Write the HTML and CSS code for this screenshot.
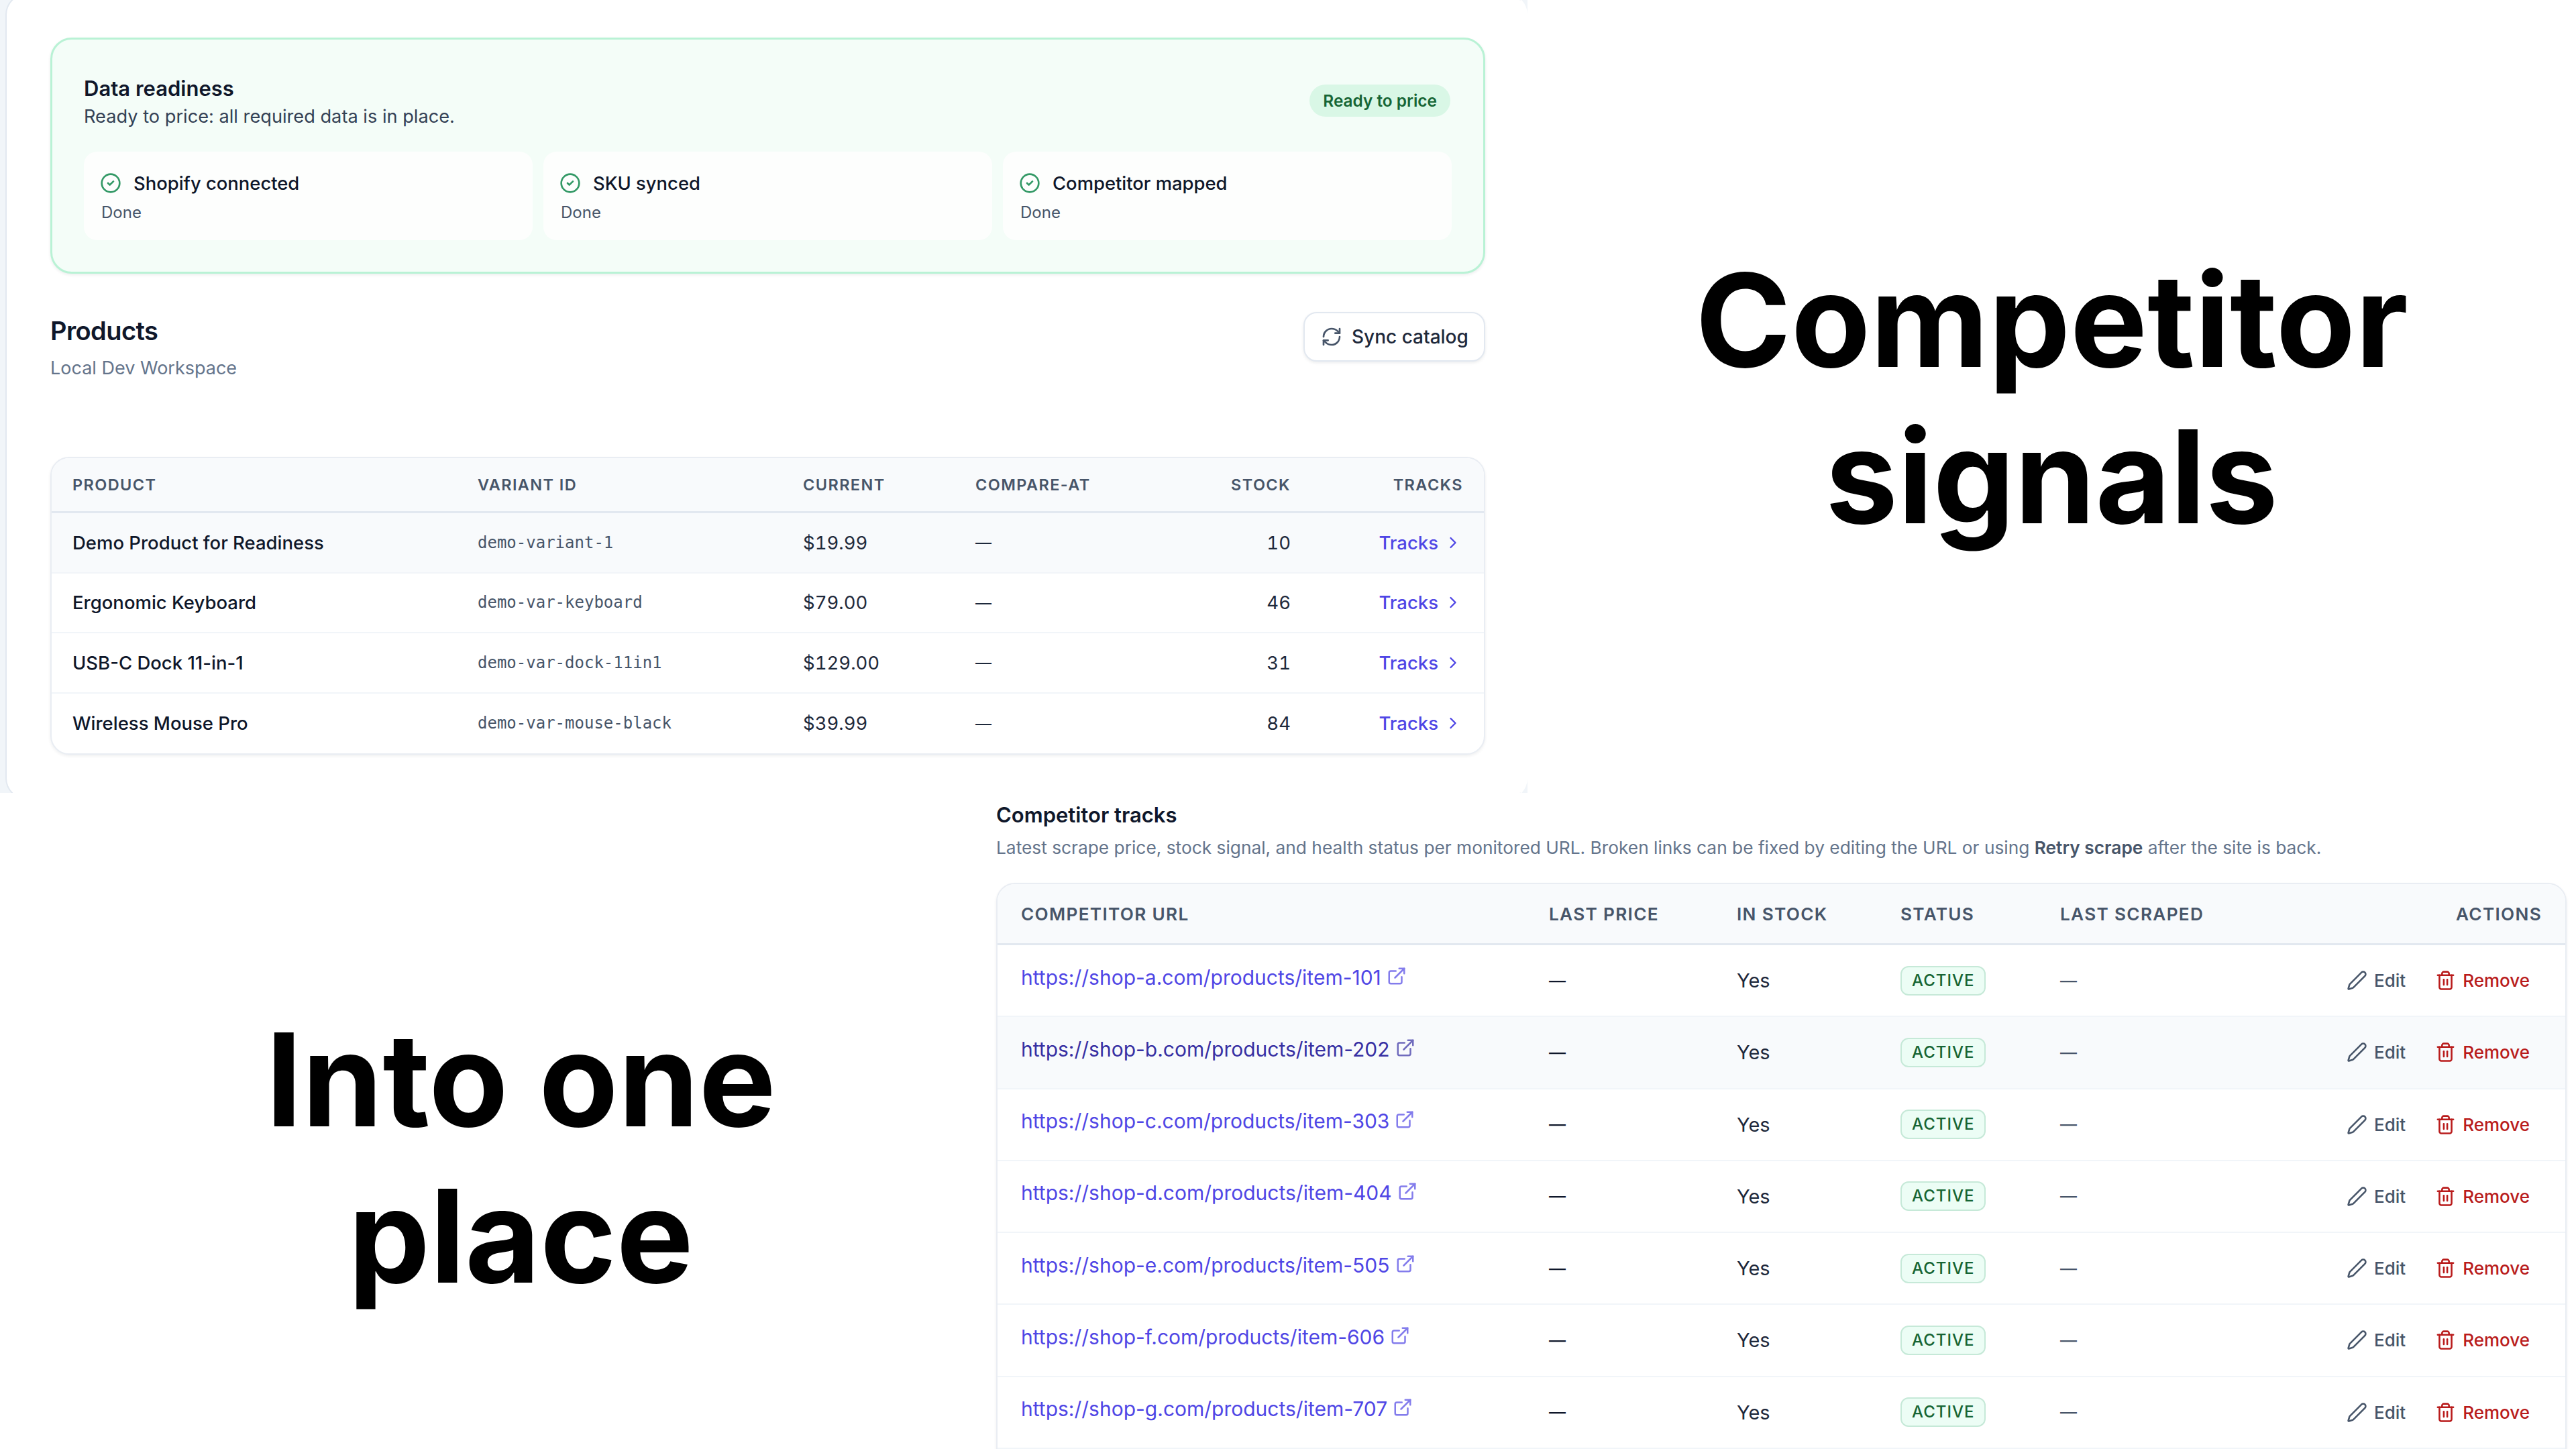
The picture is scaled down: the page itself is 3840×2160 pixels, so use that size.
FILE: index.html

```html
<!DOCTYPE html>
<html lang="en">
<head>
    <meta charset="UTF-8">
    <title>Competitor signals</title>
    <link rel="stylesheet" href="styles.css">
</head>
<body>

    <svg class="sprite" aria-hidden="true">
        <symbol id="i-check" viewBox="0 0 24 24"><circle cx="12" cy="12" r="10"/><path d="m9 12 2 2 4-4"/></symbol>
        <symbol id="i-sync" viewBox="0 0 24 24"><path d="M3 12a9 9 0 0 1 9-9 9.75 9.75 0 0 1 6.74 2.74L21 8"/><path d="M21 3v5h-5"/><path d="M21 12a9 9 0 0 1-9 9 9.75 9.75 0 0 1-6.74-2.74L3 16"/><path d="M8 16H3v5"/></symbol>
        <symbol id="i-chevron" viewBox="0 0 24 24"><path d="m9 18 6-6-6-6"/></symbol>
        <symbol id="i-external" viewBox="0 0 24 24"><path d="M15 3h6v6"/><path d="M10 14 21 3"/><path d="M18 13v6a2 2 0 0 1-2 2H5a2 2 0 0 1-2-2V8a2 2 0 0 1 2-2h6"/></symbol>
        <symbol id="i-pencil" viewBox="0 0 24 24"><path d="M21.174 6.812a1 1 0 0 0-3.986-3.987L3.842 16.174a2 2 0 0 0-.5.83l-1.321 4.352a.5.5 0 0 0 .623.622l4.353-1.32a2 2 0 0 0 .83-.497z"/></symbol>
        <symbol id="i-trash" viewBox="0 0 24 24"><path d="M3 6h18"/><path d="M19 6v14c0 1-1 2-2 2H7c-1 0-2-1-2-2V6"/><path d="M8 6V4c0-1 1-2 2-2h4c1 0 2 1 2 2v2"/><path d="M10 11v6"/><path d="M14 11v6"/></symbol>
    </svg>

    <div class="slide">

        <div class="top-row">
            <div class="shot">
                <div class="panel">

                    <section class="readiness">
                        <div class="readiness-head">
                            <div>
                                <h2 class="readiness-title">Data readiness</h2>
                                <p class="readiness-sub">Ready to price: all required data is in place.</p>
                            </div>
                            <span class="pill">Ready to price</span>
                        </div>
                        <div class="steps">
                            <div class="step">
                                <div class="step-name"><svg class="icon icon-check"><use href="#i-check"/></svg>Shopify connected</div>
                                <div class="step-state">Done</div>
                            </div>
                            <div class="step">
                                <div class="step-name"><svg class="icon icon-check"><use href="#i-check"/></svg>SKU synced</div>
                                <div class="step-state">Done</div>
                            </div>
                            <div class="step">
                                <div class="step-name"><svg class="icon icon-check"><use href="#i-check"/></svg>Competitor mapped</div>
                                <div class="step-state">Done</div>
                            </div>
                        </div>
                    </section>

                    <div class="products-head">
                        <div>
                            <h2 class="products-title">Products</h2>
                            <p class="products-sub">Local Dev Workspace</p>
                        </div>
                        <button class="sync-btn"><svg class="icon icon-sync"><use href="#i-sync"/></svg>Sync catalog</button>
                    </div>

                    <div class="table-card">
                        <table class="products">
                            <colgroup>
                                <col class="p-product"><col class="p-variant"><col class="p-current"><col class="p-compare"><col class="p-stock"><col class="p-tracks">
                            </colgroup>
                            <thead>
                                <tr><th>Product</th><th>Variant ID</th><th>Current</th><th>Compare-at</th><th class="right">Stock</th><th class="right">Tracks</th></tr>
                            </thead>
                            <tbody>
                                <tr class="hovered">
                                    <td class="name">Demo Product for Readiness</td><td class="mono">demo-variant-1</td><td>$19.99</td><td class="dash">—</td><td class="right">10</td>
                                    <td class="right"><a class="tracks-link" href="#">Tracks<svg class="icon icon-chevron"><use href="#i-chevron"/></svg></a></td>
                                </tr>
                                <tr>
                                    <td class="name">Ergonomic Keyboard</td><td class="mono">demo-var-keyboard</td><td>$79.00</td><td class="dash">—</td><td class="right">46</td>
                                    <td class="right"><a class="tracks-link" href="#">Tracks<svg class="icon icon-chevron"><use href="#i-chevron"/></svg></a></td>
                                </tr>
                                <tr>
                                    <td class="name">USB-C Dock 11-in-1</td><td class="mono">demo-var-dock-11in1</td><td>$129.00</td><td class="dash">—</td><td class="right">31</td>
                                    <td class="right"><a class="tracks-link" href="#">Tracks<svg class="icon icon-chevron"><use href="#i-chevron"/></svg></a></td>
                                </tr>
                                <tr>
                                    <td class="name">Wireless Mouse Pro</td><td class="mono">demo-var-mouse-black</td><td>$39.99</td><td class="dash">—</td><td class="right">84</td>
                                    <td class="right"><a class="tracks-link" href="#">Tracks<svg class="icon icon-chevron"><use href="#i-chevron"/></svg></a></td>
                                </tr>
                            </tbody>
                        </table>
                    </div>

                </div>
            </div>
            <h1 class="headline headline-right">Competitor<br>signals</h1>
        </div>

        <div class="bottom-row">
            <h1 class="headline headline-left">Into one<br>place</h1>
            <div class="tracks">
                <h2 class="tracks-title">Competitor tracks</h2>
                <p class="tracks-sub">Latest scrape price, stock signal, and health status per monitored URL. Broken links can be fixed by editing the URL or using <strong>Retry scrape</strong> after the site is back.</p>

                <div class="table-card table-card-open">
                    <table class="competitors">
                        <colgroup>
                            <col class="c-url"><col class="c-price"><col class="c-stock"><col class="c-status"><col class="c-scraped"><col class="c-actions">
                        </colgroup>
                        <thead>
                            <tr><th>Competitor URL</th><th>Last price</th><th>In stock</th><th>Status</th><th>Last scraped</th><th class="right">Actions</th></tr>
                        </thead>
                        <tbody>
                            <tr>
                                <td><a class="url" href="#">https://shop-a.com/products/item-101<svg class="icon icon-external"><use href="#i-external"/></svg></a></td>
                                <td class="dash">—</td><td>Yes</td><td><span class="status">Active</span></td><td class="dash dash-soft">—</td>
                                <td class="right"><div class="actions"><a class="act" href="#"><svg class="icon icon-act"><use href="#i-pencil"/></svg>Edit</a><a class="act act-danger" href="#"><svg class="icon icon-act"><use href="#i-trash"/></svg>Remove</a></div></td>
                            </tr>
                            <tr class="hovered">
                                <td><a class="url" href="#">https://shop-b.com/products/item-202<svg class="icon icon-external"><use href="#i-external"/></svg></a></td>
                                <td class="dash">—</td><td>Yes</td><td><span class="status">Active</span></td><td class="dash dash-soft">—</td>
                                <td class="right"><div class="actions"><a class="act" href="#"><svg class="icon icon-act"><use href="#i-pencil"/></svg>Edit</a><a class="act act-danger" href="#"><svg class="icon icon-act"><use href="#i-trash"/></svg>Remove</a></div></td>
                            </tr>
                            <tr>
                                <td><a class="url" href="#">https://shop-c.com/products/item-303<svg class="icon icon-external"><use href="#i-external"/></svg></a></td>
                                <td class="dash">—</td><td>Yes</td><td><span class="status">Active</span></td><td class="dash dash-soft">—</td>
                                <td class="right"><div class="actions"><a class="act" href="#"><svg class="icon icon-act"><use href="#i-pencil"/></svg>Edit</a><a class="act act-danger" href="#"><svg class="icon icon-act"><use href="#i-trash"/></svg>Remove</a></div></td>
                            </tr>
                            <tr>
                                <td><a class="url" href="#">https://shop-d.com/products/item-404<svg class="icon icon-external"><use href="#i-external"/></svg></a></td>
                                <td class="dash">—</td><td>Yes</td><td><span class="status">Active</span></td><td class="dash dash-soft">—</td>
                                <td class="right"><div class="actions"><a class="act" href="#"><svg class="icon icon-act"><use href="#i-pencil"/></svg>Edit</a><a class="act act-danger" href="#"><svg class="icon icon-act"><use href="#i-trash"/></svg>Remove</a></div></td>
                            </tr>
                            <tr>
                                <td><a class="url" href="#">https://shop-e.com/products/item-505<svg class="icon icon-external"><use href="#i-external"/></svg></a></td>
                                <td class="dash">—</td><td>Yes</td><td><span class="status">Active</span></td><td class="dash dash-soft">—</td>
                                <td class="right"><div class="actions"><a class="act" href="#"><svg class="icon icon-act"><use href="#i-pencil"/></svg>Edit</a><a class="act act-danger" href="#"><svg class="icon icon-act"><use href="#i-trash"/></svg>Remove</a></div></td>
                            </tr>
                            <tr>
                                <td><a class="url" href="#">https://shop-f.com/products/item-606<svg class="icon icon-external"><use href="#i-external"/></svg></a></td>
                                <td class="dash">—</td><td>Yes</td><td><span class="status">Active</span></td><td class="dash dash-soft">—</td>
                                <td class="right"><div class="actions"><a class="act" href="#"><svg class="icon icon-act"><use href="#i-pencil"/></svg>Edit</a><a class="act act-danger" href="#"><svg class="icon icon-act"><use href="#i-trash"/></svg>Remove</a></div></td>
                            </tr>
                            <tr>
                                <td><a class="url" href="#">https://shop-g.com/products/item-707<svg class="icon icon-external"><use href="#i-external"/></svg></a></td>
                                <td class="dash">—</td><td>Yes</td><td><span class="status">Active</span></td><td class="dash dash-soft">—</td>
                                <td class="right"><div class="actions"><a class="act" href="#"><svg class="icon icon-act"><use href="#i-pencil"/></svg>Edit</a><a class="act act-danger" href="#"><svg class="icon icon-act"><use href="#i-trash"/></svg>Remove</a></div></td>
                            </tr>
                        </tbody>
                    </table>
                </div>
            </div>
        </div>

    </div>

</body>
</html>
```

FILE: styles.css

```css
* {
    box-sizing: border-box;
}

html, body {
    margin: 0;
    background: #fff;
}

body {
    font-family: Inter, "Noto Sans", sans-serif;
    color: #0f172a;
}

h1, h2, p {
    margin: 0;
}

.sprite {
    display: none;
}

.icon {
    fill: none;
    stroke: currentColor;
    stroke-width: 2;
    stroke-linecap: round;
    stroke-linejoin: round;
    flex-shrink: 0;
}

.slide {
    width: 3840px;
    height: 2160px;
    overflow: hidden;
    display: flex;
    flex-direction: column;
    background: #fff;
}

.top-row {
    height: 1182px;
    display: flex;
    flex-shrink: 0;
}

.bottom-row {
    flex: 1;
    min-height: 0;
    display: flex;
}

.headline {
    font-size: 193px;
    line-height: 233px;
    font-weight: 700;
    color: #000;
    text-align: center;
}

.headline-right {
    flex: 1;
    align-self: flex-start;
    padding-top: 361px;
}

.headline-left {
    width: 1485px;
    flex-shrink: 0;
    padding: 311px 0 0 68px;
}

/* first screenshot, its rounded edge runs past the crop on top and bottom */
.shot {
    width: 2277px;
    height: 1182px;
    flex-shrink: 0;
    padding-left: 8px;
    background: #f1f5f9;
    overflow: hidden;
}

.panel {
    height: 1202px;
    margin-top: -10px;
    padding: 66px 61px 0 65px;
    background: #fff;
    border: 2px solid #e2e8f0;
    border-right-color: #fff;
    border-radius: 32px;
}

.readiness {
    height: 352px;
    margin-top: -2px;
    padding: 53px 47px 0;
    background: #f4fdf8;
    border: 3px solid #b9f2d5;
    border-radius: 32px;
    box-shadow: 0 2px 4px rgba(15, 23, 42, 0.08);
}

.readiness-head {
    display: flex;
    justify-content: space-between;
    align-items: center;
    height: 82px;
    margin-bottom: 32px;
}

.readiness-title {
    font-size: 31px;
    line-height: 40px;
    font-weight: 600;
}

.readiness-sub {
    margin-top: 2px;
    font-size: 27.2px;
    line-height: 40px;
    color: #334155;
}

.pill {
    padding: 0 20px;
    height: 48px;
    margin: -6px 2px 0 0;
    line-height: 48px;
    font-size: 24.4px;
    font-weight: 600;
    color: #166534;
    background: #d9f7e6;
    border-radius: 24px;
}

.steps {
    display: grid;
    grid-template-columns: repeat(3, 1fr);
    gap: 16px;
}

.step {
    height: 132px;
    padding: 27px 26px;
    background: #fdfefd;
    border-radius: 20px;
}

.step-name {
    display: flex;
    align-items: center;
    gap: 18px;
    font-size: 27.4px;
    line-height: 40px;
    font-weight: 500;
}

.icon-check {
    width: 32px;
    height: 32px;
    margin-left: -2px;
    color: #339966;
}

.step-state {
    margin-top: 8px;
    font-size: 24px;
    line-height: 32px;
    color: #475569;
}

.products-head {
    display: flex;
    justify-content: space-between;
    align-items: flex-start;
    height: 273px;
    padding-top: 61px;
}

.products-title {
    font-size: 38px;
    line-height: 48px;
    font-weight: 600;
    letter-spacing: -0.6px;
}

.products-sub {
    margin-top: 12px;
    font-size: 27px;
    line-height: 40px;
    color: #64748b;
}

.sync-btn {
    display: flex;
    align-items: center;
    gap: 14px;
    width: 271px;
    height: 74px;
    margin-top: -4px;
    padding: 0 24px;
    font: 500 28px Inter, sans-serif;
    color: #1e293b;
    background: #fff;
    border: 2px solid #e2e8f0;
    border-radius: 20px;
    box-shadow: 0 2px 4px rgba(15, 23, 42, 0.08);
    white-space: nowrap;
}

.icon-sync {
    width: 32px;
    height: 32px;
    color: #475569;
}

/* shared table bits */
.table-card {
    background: #fff;
    border: 2px solid #e9edf3;
    border-radius: 28px;
    box-shadow: 0 2px 4px rgba(15, 23, 42, 0.07);
    overflow: hidden;
}

table {
    width: 100%;
    table-layout: fixed;
    border-collapse: separate;
    border-spacing: 0;
}

th {
    text-align: left;
    text-transform: uppercase;
    font-weight: 600;
    color: #475569;
    background: #f8fafc;
    border-bottom: 3px solid #e2e8f0;
}

td {
    border-bottom: 2px solid #f1f5f9;
}

.right {
    text-align: right;
}

.hovered td {
    background: #f8fafc;
}

/* products table */
.products th {
    height: 82px;
    padding: 0 33px 0 31px;
    font-size: 23.5px;
    letter-spacing: 1.4px;
}

.products th:last-child {
    padding-right: 31px;
}

.products td {
    height: 89.5px;
    padding: 0 33px 0 31px;
    font-size: 27.5px;
    font-variant-numeric: tabular-nums;
    color: #1e293b;
}

.products tbody tr:last-child td {
    border-bottom: 0;
}

.p-product { width: 604px; }
.p-variant { width: 485px; }
.p-current { width: 257px; }
.p-compare { width: 300px; }
.p-stock { width: 234px; }
.p-tracks { width: 255px; }

.products td.name {
    font-weight: 500;
    font-variant-numeric: normal;
    color: #0f172a;
}

.products td.mono {
    font-family: "DejaVu Sans Mono", monospace;
    font-size: 24px;
    color: #475569;
}

.products td.dash {
    font-size: 24px;
}

.tracks-link {
    display: inline-flex;
    align-items: center;
    gap: 8px;
    margin-right: -1px;
    font-weight: 500;
    color: #4f46e5;
    text-decoration: none;
}

.icon-chevron {
    width: 28px;
    height: 28px;
}

/* competitor tracks */
.tracks {
    flex: 1;
    padding-right: 14px;
}

.tracks-title {
    margin-top: 13px;
    font-size: 31px;
    line-height: 40px;
    font-weight: 600;
}

.tracks-sub {
    margin-top: 9px;
    font-size: 26.3px;
    line-height: 40px;
    color: #64748b;
}

.tracks-sub strong {
    font-weight: 600;
    color: #475569;
}

.table-card-open {
    margin-top: 32px;
    min-height: 900px;
}

.competitors th {
    height: 91px;
    padding: 0 35px;
    font-size: 26.2px;
    letter-spacing: 1.3px;
}

.competitors td {
    height: 107.25px;
    padding: 0 35px;
    font-size: 29px;
    color: #1e293b;
}

.c-url { width: 787px; }
.c-price { width: 280px; }
.c-stock { width: 244px; }
.c-status { width: 238px; }
.c-scraped { width: 300px; }

.url {
    display: inline-flex;
    align-items: center;
    gap: 8px;
    margin-bottom: 10px;
    vertical-align: middle;
    font-size: 30px;
    color: #4f46e5;
    text-decoration: none;
}

.hovered .url {
    color: #3730a3;
}

.icon-external {
    width: 30px;
    height: 30px;
    margin-top: -4px;
    opacity: 0.7;
}

.competitors td.dash {
    font-size: 25px;
    font-weight: 500;
    color: #0f172a;
}

.competitors td.dash-soft {
    color: #475569;
}

.status {
    display: inline-block;
    height: 44px;
    padding: 0 15px;
    line-height: 40px;
    font-size: 24px;
    font-weight: 450;
    letter-spacing: 1px;
    text-transform: uppercase;
    color: #166534;
    background: #ecfdf5;
    border: 2px solid #c6e9d8;
    border-radius: 12px;
}

.actions {
    display: flex;
    justify-content: flex-end;
    gap: 44px;
    margin-right: 18px;
}

.act {
    display: inline-flex;
    align-items: center;
    gap: 10px;
    font-size: 26px;
    font-weight: 450;
    color: #475569;
    text-decoration: none;
}

.act-danger {
    color: #b91c1c;
}

.icon-act {
    width: 31px;
    height: 31px;
}
```
